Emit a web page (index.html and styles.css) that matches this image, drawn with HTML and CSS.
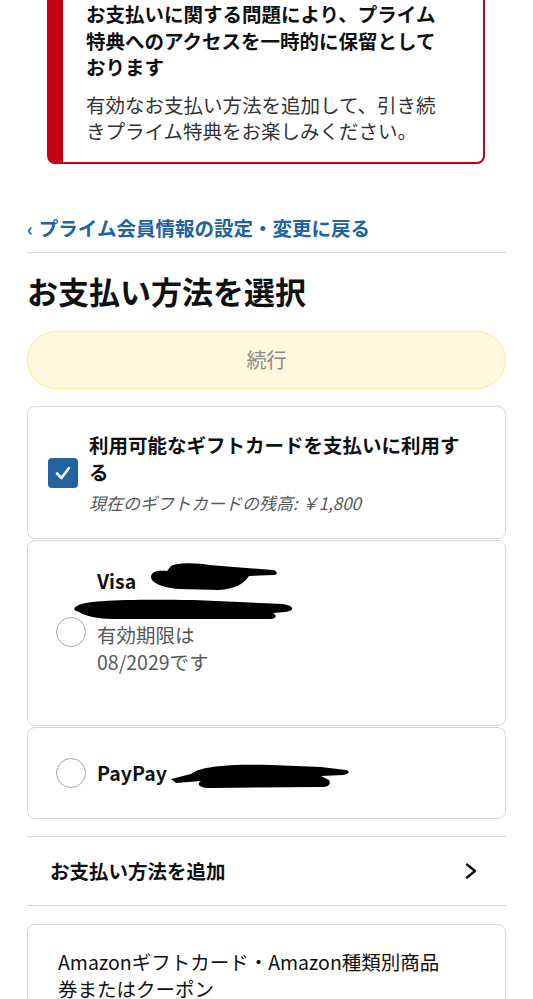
FILE: index.html
```html
<!DOCTYPE html>
<html lang="ja">
<head>
    <meta charset="UTF-8">
    <meta name="viewport" content="width=device-width, initial-scale=1.0">
    <title>お支払い方法を選択</title>
    <link rel="stylesheet" href="styles.css">
</head>
<body>
    <div class="page">
        <div class="alert">
            <p class="alert-title">お支払いに関する問題により、プライム特典へのアクセスを一時的に保留としております</p>
            <p class="alert-text">有効なお支払い方法を追加して、引き続きプライム特典をお楽しみください。</p>
        </div>

        <a class="back-link" href="#"><span class="back-arrow">‹</span>プライム会員情報の設定・変更に戻る</a>

        <h1 class="page-title">お支払い方法を選択</h1>

        <button class="continue-btn" type="button">続行</button>

        <div class="card gift-card">
            <span class="checkbox">
                <svg width="30" height="30" viewBox="0 0 30 30"><polyline points="9,15.5 13.5,20 21,10" fill="none" stroke="#fff" stroke-width="2.6" stroke-linecap="round" stroke-linejoin="round"/></svg>
            </span>
            <div class="card-body">
                <div class="card-title">利用可能なギフトカードを支払いに利用する</div>
                <div class="card-note">現在のギフトカードの残高: ￥1,800</div>
            </div>
        </div>

        <div class="card visa-card">
            <span class="radio radio-low"></span>
            <div class="card-body">
                <div class="card-title">Visa</div>
                <div class="card-line"></div>
                <div class="card-sub">有効期限は<br>08/2029です</div>
            </div>
            <!-- redaction marks -->
            <svg class="scribble scribble-a" width="128" height="30" viewBox="0 0 128 30"><path d="M2 15 C2 9 10 8 18 9 L22 4 C30 0 50 1 60 3 L124 8 C129 9 129 13 124 13 L100 14 C95 22 85 27 70 28 L30 27 C15 26 2 21 2 15 Z" fill="#000"/></svg>
            <svg class="scribble scribble-b" width="222" height="22" viewBox="0 0 222 22"><path d="M4 8 C10 2 60 1 120 2 L210 6 C222 8 222 13 212 14 L200 15 C205 18 203 21 195 21 L40 21 C25 21 12 18 6 14 C0 12 0 10 4 8 Z" fill="#000"/></svg>
        </div>

        <div class="card paypay-card">
            <span class="radio"></span>
            <div class="card-body">
                <div class="card-title">PayPay</div>
            </div>
            <svg class="scribble scribble-c" width="180" height="28" viewBox="0 0 180 28"><path d="M0 17 L20 12 C30 4 60 2 100 3 L150 5 L175 8 C180 10 178 12 172 13 L150 14 L158 18 C160 22 158 25 150 25 L40 26 C28 26 25 22 30 19 L5 21 Z" fill="#000"/></svg>
        </div>

        <a class="add-row" href="#">
            <span>お支払い方法を追加</span>
            <svg width="12" height="16" viewBox="0 0 12 16"><polyline points="2,1.5 10,8 2,14.5" fill="none" stroke="#0f1111" stroke-width="2.4" stroke-linecap="round" stroke-linejoin="round"/></svg>
        </a>

        <div class="card coupon-card">
            <div class="coupon-text">Amazonギフトカード・Amazon種類別商品<br>券またはクーポン</div>
        </div>
    </div>
</body>
</html>
```

FILE: styles.css
```css
/* Base */
* {
    margin: 0;
    padding: 0;
    box-sizing: border-box;
}

body {
    font-family: "Noto Sans CJK JP", "Noto Sans", sans-serif;
    font-size: 19.5px;
    line-height: 27px;
    color: #0f1111;
    background-color: #fff;
    overflow: hidden;
}

.page {
    padding: 0 27px 40px;
}

/* Alert */
.alert {
    margin: -20px 21px 0 20px;
    padding: 19px 40px 18px 23px;
    border: 2px solid #c40012;
    border-left-width: 16px;
    border-radius: 8px;
}

.alert-title {
    font-weight: bold;
    line-height: 26.5px;
    color: #0f1111;
}

.alert-text {
    margin-top: 11px;
    line-height: 26px;
    color: #333;
}

/* Back link + title */
.back-link {
    display: block;
    margin-top: 50px;
    padding-bottom: 10px;
    border-bottom: 1px solid #d5d9d9;
    color: #2162a1;
    font-weight: bold;
    text-decoration: none;
}

.back-arrow {
    display: inline-block;
    margin-right: 6px;
    font-size: 18px;
}

.page-title {
    margin-top: 19px;
    font-size: 31px;
    line-height: 38px;
    font-weight: bold;
}

/* Continue button */
.continue-btn {
    display: block;
    width: 100%;
    height: 58px;
    margin-top: 21px;
    background-color: #fff8dc;
    border: 1px solid #fbe69b;
    border-radius: 29px;
    font-family: inherit;
    font-size: 20px;
    color: #8a8a8a;
}

/* Cards */
.card {
    position: relative;
    display: flex;
    align-items: center;
    border: 1px solid #d5d9d9;
    border-radius: 8px;
}

.gift-card {
    margin-top: 17px;
    padding: 24px 32px 22px 20px;
}

.visa-card {
    margin-top: 1px;
    padding: 26px 20px 50px 28px;
    align-items: flex-start;
}

.paypay-card {
    margin-top: 1px;
    padding: 30px 20px 30px 28px;
}

.checkbox {
    flex-shrink: 0;
    width: 30px;
    height: 30px;
    margin-right: 11px;
    background-color: #2162a1;
    border-radius: 4px;
}

.checkbox svg {
    display: block;
}

.radio {
    flex-shrink: 0;
    width: 30px;
    height: 30px;
    margin-right: 11px;
    border: 1.5px solid #a6a6a6;
    border-radius: 50%;
}

.radio-low {
    margin-top: 50px;
}

.card-title {
    font-weight: bold;
}

.card-note {
    margin-top: 4px;
    font-size: 17px;
    font-style: italic;
    color: #565959;
}

.card-line {
    height: 27px;
}

.card-sub {
    color: #565959;
}

.scribble {
    position: absolute;
}

.scribble-a {
    left: 121px;
    top: 21px;
}

.scribble-b {
    left: 45px;
    top: 57px;
}

.scribble-c {
    left: 143px;
    top: 34px;
}

/* Add payment row */
.add-row {
    display: flex;
    justify-content: space-between;
    align-items: center;
    height: 70px;
    margin-top: 17px;
    padding: 0 29px 0 23px;
    border-top: 1px solid #d5d9d9;
    border-bottom: 1px solid #d5d9d9;
    color: #0f1111;
    font-weight: bold;
    text-decoration: none;
}

.coupon-card {
    margin-top: 18px;
    padding: 23px 20px 30px 30px;
}
```
